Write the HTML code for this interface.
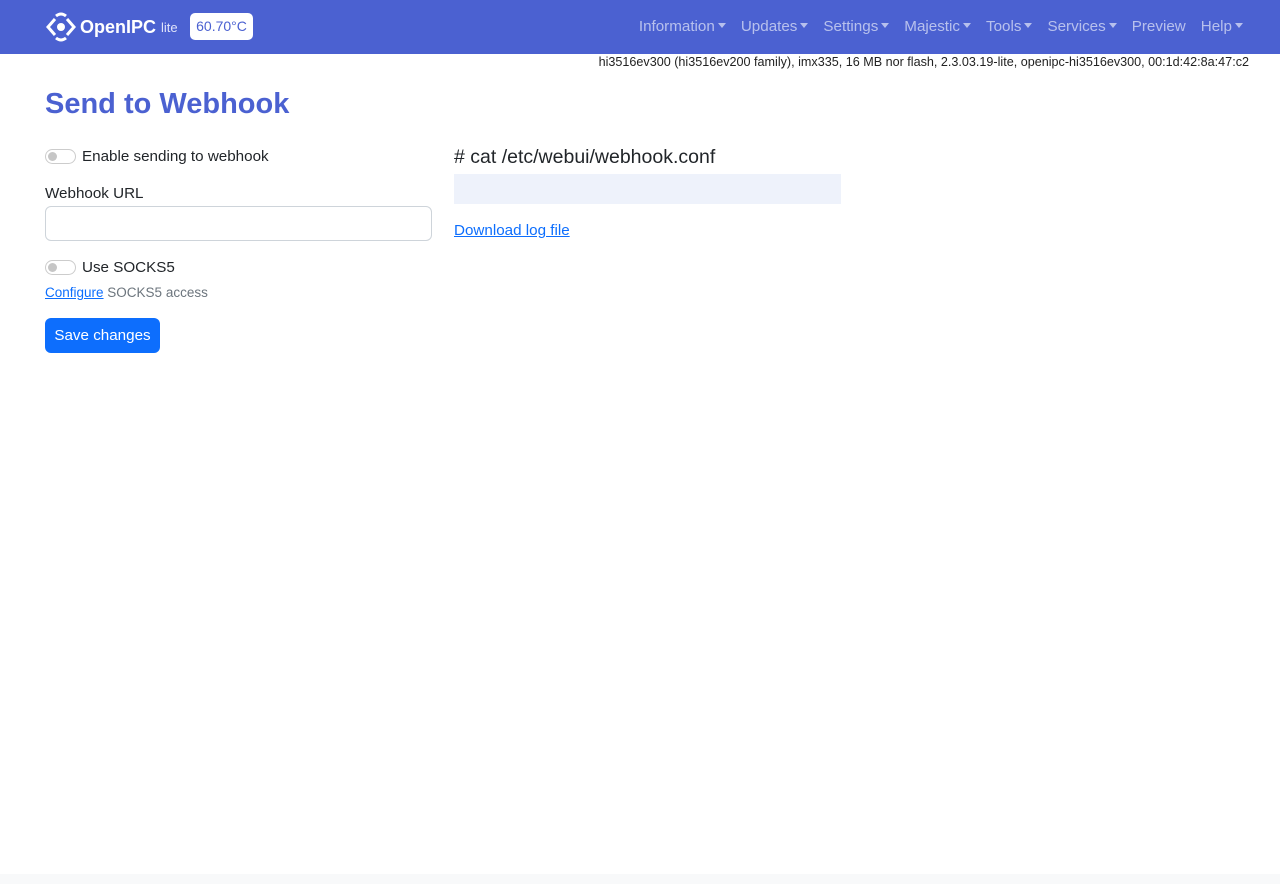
<!DOCTYPE html>
<html><head><meta charset="utf-8"><style>
*{box-sizing:border-box;margin:0;padding:0}
body{width:1280px;height:884px;background:#fff;font-family:"Liberation Sans",sans-serif;color:#212529;position:relative;overflow:hidden}
.nav{position:absolute;left:0;top:0;width:1280px;height:54px;background:#4b61d1}
.brand{position:absolute;left:46px;top:12px;color:#fff;font-weight:bold;font-size:18px;display:flex;align-items:center}
.brand small{font-weight:normal;font-size:13px;margin-left:5px;color:#e0e4fa}
.temp{position:absolute;left:190px;top:13px;width:63px;height:27px;background:#fff;border-radius:5px;color:#4b61d1;font-size:14px;line-height:27px;text-align:center}
.menu{position:absolute;right:37px;top:18px;display:flex;gap:0;font-size:15.2px;color:rgba(255,255,255,.6)}
.menu span{margin-left:15px}
.car{display:inline-block;border-top:5px solid rgba(255,255,255,.6);border-left:4px solid transparent;border-right:4px solid transparent;vertical-align:3px;margin-left:3px}
.info{position:absolute;right:31px;top:55px;font-size:12.6px;color:#222}
h1{position:absolute;left:45px;top:88px;font-size:29px;color:#4b61d1;font-weight:bold}
.sw{position:absolute;left:45px;width:31px;height:15px;border:1px solid #ccc;border-radius:8px}
.sw:after{content:"";position:absolute;left:2px;top:2px;width:9px;height:9px;border-radius:50%;background:#c6c6c6}
.t{position:absolute;font-size:15.2px}
input{position:absolute;left:45px;top:206px;width:387px;height:35px;border:1px solid #ced4da;border-radius:6px}
a{color:#0d6efd}
.btn{position:absolute;left:45px;top:318px;width:115px;height:35px;background:#0d6efd;color:#fff;border-radius:6px;font-size:15.2px;line-height:35px;text-align:center}
.pre{position:absolute;left:454px;top:174px;width:387px;height:30px;background:#eef2fb}
.foot{position:absolute;left:0;bottom:0;width:1280px;height:10px;background:#f8f9fa}
</style></head><body>
<div class="nav">
<div class="brand"><svg width="30" height="30" viewBox="0 0 30 30" fill="none" stroke="#fff" stroke-width="3"><path d="M9 7 L2 15 L9 23"/><path d="M21 7 L28 15 L21 23"/><path d="M10 4 Q15 0 20 4"/><path d="M10 26 Q15 30 20 26"/><circle cx="15" cy="15" r="4" fill="#fff" stroke="none"/></svg><span style="margin-left:4px">OpenIPC</span><small>lite</small></div>
<div class="temp">60.70°C</div>
<div class="menu"><span>Information<i class="car"></i></span><span>Updates<i class="car"></i></span><span>Settings<i class="car"></i></span><span>Majestic<i class="car"></i></span><span>Tools<i class="car"></i></span><span>Services<i class="car"></i></span><span>Preview</span><span>Help<i class="car"></i></span></div>
</div>
<div class="info">hi3516ev300 (hi3516ev200 family), imx335, 16 MB nor flash, 2.3.03.19-lite, openipc-hi3516ev300, 00:1d:42:8a:47:c2</div>
<h1>Send to Webhook</h1>
<div class="sw" style="top:149px"></div><div class="t" style="left:82px;top:148px">Enable sending to webhook</div>
<div class="t" style="left:45px;top:185px">Webhook URL</div>
<input>
<div class="sw" style="top:260px"></div><div class="t" style="left:82px;top:259px">Use SOCKS5</div>
<div class="t" style="left:45px;top:285px;font-size:13.5px;color:#6c757d"><a href="#">Configure</a> SOCKS5 access</div>
<div class="btn">Save changes</div>
<div class="t" style="left:454px;top:146px;font-size:19.5px">#&nbsp;cat /etc/webui/webhook.conf</div>
<div class="pre"></div>
<div class="t" style="left:454px;top:222px"><a href="#">Download log file</a></div>
<div class="foot"></div>
</body></html>
